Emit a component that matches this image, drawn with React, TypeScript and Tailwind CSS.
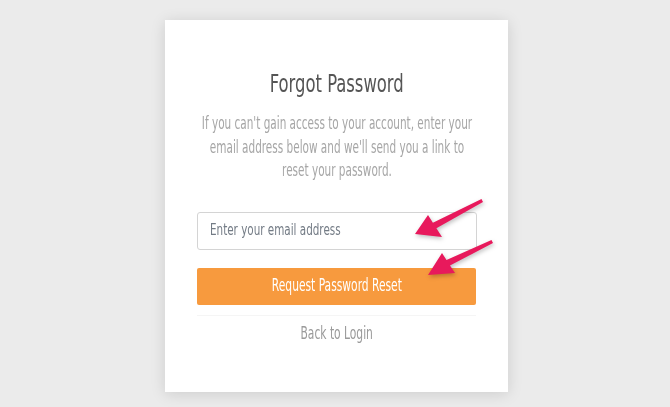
import React from "react";

const font = { fontFamily: '"DejaVu Sans Condensed", "Liberation Sans Narrow", "Liberation Sans", sans-serif' };

export default function App() {
  return (
    <div className="w-[670px] h-[407px] bg-[#ebebeb] flex justify-center pt-[20px] pl-[3px] overflow-hidden" style={font}>
      <div className="relative w-[343px] h-[372px] bg-white shadow-[0_2px_14px_rgba(0,0,0,0.13)] flex flex-col items-center pt-[46px]">
        <h1 className="text-[25px] leading-[36px] text-[#555] whitespace-nowrap scale-x-[0.73]">Forgot Password</h1>
        <p className="mt-[10px] w-[420px] shrink-0 text-center text-[17px] leading-[23.5px] text-[#a6a6a6] whitespace-nowrap scale-x-[0.685]">
          If you can't gain access to your account, enter your
          <br />
          email address below and we'll send you a link to
          <br />
          reset your password.
        </p>
        <div className="mt-[29px] w-[280px] h-[38px] border border-[#d4d4d4] rounded-[3px] flex items-center px-[12px]">
          <span className="text-[16.5px] text-[#737b85] whitespace-nowrap scale-x-[0.7] origin-left">Enter your email address</span>
        </div>
        <div className="mt-[18px] w-[279px] h-[37px] bg-[#f79a3e] rounded-[2px] flex items-center justify-center">
          <span className="text-[17px] text-white whitespace-nowrap scale-x-[0.7]">Request Password Reset</span>
        </div>
        <div className="mt-[10px] w-[279px] border-t border-[#f5f5f5]" />
        <div className="mt-[5px] text-[17px] leading-[24px] text-[#9a9a9a] whitespace-nowrap scale-x-[0.7]">Back to Login</div>
        <svg className="absolute left-0 top-0 pointer-events-none" width="343" height="300" viewBox="0 0 343 300" style={{ filter: "drop-shadow(1px 2px 2px rgba(0,0,0,0.25))" }}>
          <polygon fill="#e8195c" points="250,214 263,195 267.9,202.7 316.5,179 318,182 271.4,208.2 277,217" />
          <polygon fill="#e8195c" points="263,255 277,233 281.5,240 326.5,220 328,223 285,245.6 290,253" />
        </svg>
      </div>
    </div>
  );
}
